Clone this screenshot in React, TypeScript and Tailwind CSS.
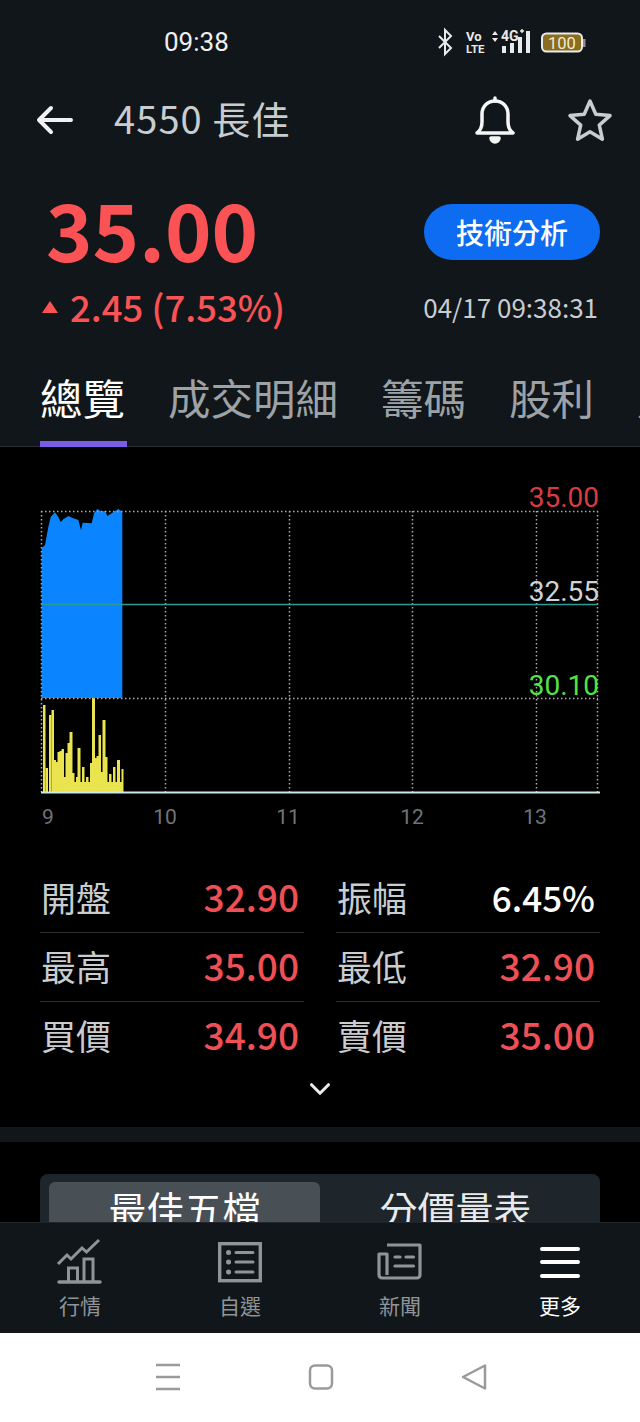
import { ChevronDown } from 'lucide-react';

const cjk = "font-['Noto_Sans_CJK_TC',sans-serif]";

// top edge of the blue price area, as [x, y] in page pixels
const areaTop = [
  [41.7, 548], [45, 545], [48.3, 527], [50.7, 517], [55, 512.3], [58.3, 517], [60.7, 522], [63.3, 519.3],
  [68.3, 516], [73.3, 518.3], [78.3, 520], [81, 530], [82.7, 522.7], [91.7, 523.3], [94, 513.3], [97.3, 509],
  [101.7, 511.7], [105, 510.7], [107.3, 516], [111.7, 513.3], [118.3, 509], [122.3, 511.7],
];

// yellow volume bars: [x, width, top]
const volumeBars = [
  [43, 2.5, 705], [45.5, 2.5, 768], [49, 2.5, 715], [51.5, 2.5, 710], [53.5, 2.5, 760], [55.5, 2.5, 762], [57.5, 2.5, 752],
  [59.5, 2.5, 751], [61.5, 2.5, 749], [63.5, 2.5, 777], [65.5, 2.5, 753], [67.5, 2.5, 743], [69.5, 3, 732], [72, 2.5, 773],
  [74, 2.5, 782], [76, 2, 777], [77.5, 3, 748], [80, 2.5, 782], [82, 2.5, 767], [84, 2.5, 782], [86, 2.5, 777], [88, 2.5, 782],
  [90, 2.5, 763], [92, 3, 698], [94.5, 2.5, 758], [96.5, 2.5, 756], [98.5, 2.5, 735], [100.5, 2.5, 772], [102.5, 3, 720],
  [105, 2.5, 757], [107, 2.5, 782], [109, 2.5, 774], [111, 2.5, 782], [113, 2.5, 767], [115, 2.5, 782], [117, 3, 760],
  [119.5, 2.5, 782], [121.5, 2, 769],
];

const gridX = [165, 289, 412, 536];
const timeLabels = [
  { x: 48, t: '9' },
  { x: 165, t: '10' },
  { x: 288, t: '11' },
  { x: 412, t: '12' },
  { x: 535, t: '13' },
];

const quotes = [
  { label: '開盤', value: '32.90' },
  { label: '振幅', value: '6.45%', white: true },
  { label: '最高', value: '35.00' },
  { label: '最低', value: '32.90' },
  { label: '買價', value: '34.90' },
  { label: '賣價', value: '35.00' },
];

function StatusIcons() {
  return (
    <svg width="156" height="32" viewBox="0 0 156 32" fill="none" className="text-[#e8eaeb]">
      <path d="M3 10l12 12-6 6V4l6 6L3 22" stroke="currentColor" strokeWidth="2" />
      <text x="30" y="15" fontSize="13" fontWeight="700" fill="currentColor" fontFamily="Roboto">Vo</text>
      <text x="30" y="27" fontSize="11.500" fontWeight="700" fill="currentColor" fontFamily="Roboto">LTE</text>
      <path d="M56 9l3-4 3 4zM56 12l3 4 3-4z" fill="currentColor" />
      <text x="65" y="15" fontSize="14" fontWeight="700" fill="currentColor" fontFamily="Roboto">4G</text>
      <path d="M84 5h4M86 3v4" stroke="currentColor" strokeWidth="1.400" />
      <rect x="66" y="20" width="4" height="7" fill="currentColor" />
      <rect x="74" y="17" width="4" height="10" fill="currentColor" />
      <rect x="82" y="11" width="4" height="16" fill="currentColor" />
      <rect x="90" y="5" width="4" height="22" fill="currentColor" />
      <rect x="106" y="7.500" width="40" height="18" rx="4.500" fill="#8a6d1f" stroke="currentColor" strokeWidth="2" />
      <text x="126" y="22.500" textAnchor="middle" fontSize="16.500" fill="#f3ecd4" fontFamily="Roboto">100</text>
      <rect x="147" y="13" width="2.500" height="8" fill="#8d9094" />
    </svg>
  );
}

function Chart() {
  return (
    <svg width="640" height="395" viewBox="0 447 640 395" className="block">
      <path
        d={`M41.700 698 ${areaTop.map((p) => `L${p[0]} ${p[1]}`).join(' ')} L122.300 698 Z`}
        fill="#0a84ff"
      />
      {volumeBars.map((b) => (
        <rect key={b[0]} x={b[0]} y={b[2]} width={b[1]} height={792 - b[2]} fill="#e9e44f" />
      ))}
      <g stroke="#a9adad" strokeWidth="1.500" strokeDasharray="1.500 2.500">
        <path d="M41 511.500H598" />
        <path d="M41 698.500H598" />
        <path d="M41.500 511V792" />
        <path d="M597.500 511V792" />
        {gridX.map((x) => (
          <path key={x} d={`M${x + 0.5} 511V792`} />
        ))}
      </g>
      <path d="M41 604.500H598" stroke="#2a9d96" strokeWidth="1.500" />
      <path d="M41 792.500H600" stroke="#c8ecec" strokeWidth="2" />
      <g fontSize="28" textAnchor="end" fontFamily="Roboto">
        <text x="599" y="507" fill="#d83c42">35.00</text>
        <text x="599" y="601" fill="#d0d2d3">32.55</text>
        <text x="599" y="695" fill="#52e344">30.10</text>
      </g>
      <g fontSize="21" textAnchor="middle" fill="#6f7479" fontFamily="Roboto">
        {timeLabels.map((l) => (
          <text key={l.t} x={l.x} y="824">{l.t}</text>
        ))}
      </g>
    </svg>
  );
}

function NavIcon({ name }: { name: string }) {
  if (name === 'quote') {
    return (
      <svg width="48" height="48" viewBox="0 0 48 48" fill="none" stroke="#8f9499" strokeWidth="3">
        <path d="M2 26l9-9 4 4 11-11 4.500 4L43 2" />
        <path d="M3 44h41" strokeWidth="3.500" strokeLinecap="round" />
        <path d="M12.500 43V30h9v13M28 43V21h9v22" />
      </svg>
    );
  }
  if (name === 'list') {
    return (
      <svg width="48" height="48" viewBox="0 0 48 48" fill="none" stroke="#8f9499">
        <rect x="3.700" y="5.700" width="40.600" height="37" strokeWidth="3.400" />
        <path d="M20 14.500h17M20 24h17M20 34h17" strokeWidth="3" strokeLinecap="round" />
        <path d="M12.500 14.500h.1M12.500 24h.1M12.500 34h.1" strokeWidth="5" strokeLinecap="round" />
      </svg>
    );
  }
  if (name === 'news') {
    return (
      <svg width="48" height="48" viewBox="0 0 48 48" fill="none" stroke="#8f9499" strokeWidth="3.200">
        <path d="M11 7h33v30a3 3 0 0 1-3 3H6a3 3 0 0 1-3-3V16h8v21" strokeLinejoin="round" />
        <path d="M30 19h7.500M19 28h18.500M19 19h5" strokeLinecap="round" />
      </svg>
    );
  }
  return (
    <svg width="48" height="48" viewBox="0 0 48 48" fill="none" stroke="#ffffff" strokeWidth="4" strokeLinecap="round">
      <path d="M6 11h36M6 24h36M6 38h36" />
    </svg>
  );
}

export default function App() {
  return (
    <div className={`h-[1422px] w-[640px] flex flex-col overflow-hidden bg-black ${cjk}`}>
      <div className="bg-[#11161a] shrink-0">
        <div className="h-[84px] flex items-center justify-between pl-[164px] pr-[48px]">
          <span className="font-['Roboto',sans-serif] text-[26px] text-[#eef0f0]">09:38</span>
          <StatusIcons />
        </div>

        <div className="h-[72px] flex items-center pl-[36px] pr-[26px]">
          <svg width="38" height="34" viewBox="0 0 38 34" fill="none" stroke="#f0f1f2" strokeWidth="4" strokeLinecap="round" strokeLinejoin="round">
            <path d="M35 17H4M15 5L3 17l12 12" />
          </svg>
          <h1 className="ml-[40px] -translate-y-[2px] text-[38px] leading-none text-[#c9cdd0] tracking-[1.1px]">4550 長佳</h1>
          <svg className="ml-auto" width="44" height="48" viewBox="0 0 44 48" fill="none" stroke="#f5f6f6" strokeWidth="3.500" strokeLinejoin="round">
            <path d="M4 37c4-3 5-6 5-11v-8c0-8 6-13 13-13s13 5 13 13v8c0 5 1 8 5 11z" />
            <path d="M22 5V2" strokeLinecap="round" />
            <path d="M18 42a4 4 0 0 0 8 0z" fill="#f5f6f6" />
          </svg>
          <svg className="ml-[49px]" width="48" height="48" viewBox="0 0 48 48" fill="none" stroke="#c9cdd0" strokeWidth="3.500" strokeLinejoin="round">
            <path d="M24 5l5.800 13.200 14.200 1.400-10.700 9.500 3.100 14.100L24 35.800l-12.400 7.400 3.100-14.100L4 19.600l14.200-1.400z" />
          </svg>
        </div>

        <div className="h-[120px] pl-[46px] pr-[40px] pt-[22px] flex items-center justify-between">
          <span className="text-[79px] leading-none font-bold text-[#fb5255]">35.00</span>
          <button className="w-[176px] h-[56px] mt-[10px] rounded-full bg-[#0d6cf2] text-white text-[28px] font-medium leading-none">技術分析</button>
        </div>

        <div className="h-[66px] pl-[42px] pr-[42px] pb-[4px] flex items-center">
          <span className="w-0 h-0 border-x-[8px] border-x-transparent border-b-[12px] border-b-[#fb5255]" />
          <span className="ml-[12px] text-[36.500px] leading-none font-medium text-[#fb5255]">2.45 (7.53%)</span>
          <span className="ml-auto text-[26px] leading-none text-[#c9cdd0]">04/17 09:38:31</span>
        </div>

        <div className="h-[105px] border-b border-[#2b2e32] relative flex items-center gap-[43px] pl-[40px] pt-[6px] pb-0 whitespace-nowrap text-[42.500px] leading-none text-[#9da2a6]">
          <span className="text-white">總覽</span>
          <span>成交明細</span>
          <span>籌碼</span>
          <span>股利</span>
          <span>財報</span>
          <span className="absolute left-[40px] bottom-[-1px] w-[87px] h-[6px] bg-[#7a5ce6]" />
        </div>
      </div>

      <main className="flex-1 min-h-0 overflow-hidden">
        <Chart />

        <div className="mt-[22px] px-[40px] grid grid-cols-2 gap-x-[32px]">
          {quotes.map((q, i) => (
            <div key={q.label} className={`h-[69px] pb-[4px] flex items-center justify-between pl-[1px] pr-[5px] ${i < 4 ? 'border-b border-[#2b2e32]' : ''}`}>
              <span className="text-[35px] leading-none text-[#c9cdd0]">{q.label}</span>
              <span className={`leading-none font-medium ${q.white ? 'text-[35px] text-white' : 'text-[37px] text-[#ee5055]'}`}>{q.value}</span>
            </div>
          ))}
        </div>

        <div className="h-[56px] pb-[20px] flex items-center justify-center">
          <ChevronDown size={34} strokeWidth={2.200} className="text-[#e8eaeb]" />
        </div>

        <div className="h-[15px] bg-[#11161a]" />

        <div className="mt-[32px] mx-[40px] h-[120px] rounded-t-lg bg-[#1e252b] pt-[8px] px-[9px] flex">
          <div className="w-[271px] h-[60px] rounded-t-md bg-[#484f55] text-center text-[38px] leading-[52px] text-white">最佳五檔</div>
          <div className="flex-1 text-center text-[38px] leading-[52px] text-[#e8eaeb]">分價量表</div>
        </div>
      </main>

      <nav className="h-[111px] shrink-0 bg-[#11161a] border-t border-[#22262a] grid grid-cols-4">
        {[
          { icon: 'quote', label: '行情' },
          { icon: 'list', label: '自選' },
          { icon: 'news', label: '新聞' },
          { icon: 'more', label: '更多', on: true },
        ].map((t) => (
          <div key={t.label} className="flex flex-col items-center pt-[15px]">
            <NavIcon name={t.icon} />
            <span className={`mt-[9px] text-[21px] leading-none ${t.on ? 'text-white' : 'text-[#8f9499]'}`}>{t.label}</span>
          </div>
        ))}
      </nav>

      <div className="h-[89px] shrink-0 bg-white flex items-center justify-center gap-[121px] pl-[2px] pb-[1px]">
        <svg width="32" height="32" viewBox="0 0 32 32" stroke="#9a9a9a" strokeWidth="2.500">
          <path d="M4 4h24M4 16h24M4 28h24" />
        </svg>
        <svg width="32" height="32" viewBox="0 0 32 32" fill="none" stroke="#9a9a9a" strokeWidth="2.500">
          <rect x="5" y="4.500" width="22" height="23" rx="5" />
        </svg>
        <svg width="32" height="32" viewBox="0 0 32 32" fill="none" stroke="#9a9a9a" strokeWidth="2.500" strokeLinejoin="round">
          <path d="M5 16L27 4.500v23z" />
        </svg>
      </div>
    </div>
  );
}
